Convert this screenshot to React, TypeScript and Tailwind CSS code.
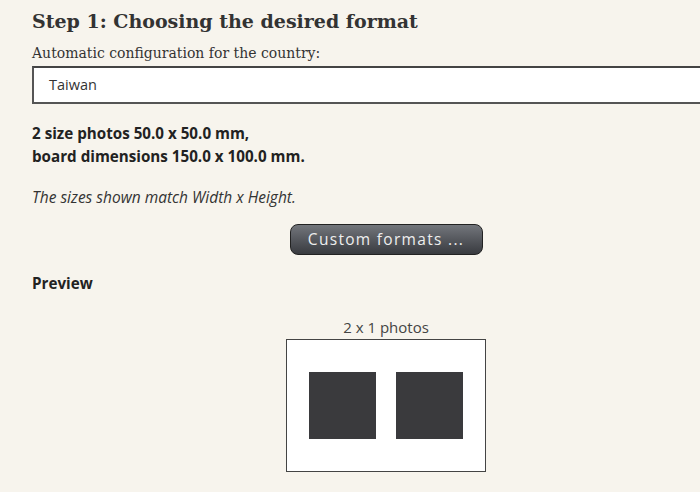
export default function App() {
  return (
    <div className="h-[492px] w-[700px] overflow-hidden bg-[#f7f4ed] text-[#333333]">
      <div className="ml-8 w-[708px]" style={{ fontFamily: '"Open Sans", sans-serif' }}>
        <h1
          className="pt-[7px] text-[19px] font-bold leading-[28px] text-[#333]"
          style={{ fontFamily: '"DejaVu Serif", Georgia, serif' }}
        >
          Step 1: Choosing the desired format
        </h1>
        <label
          className="mt-[8px] block text-[14px] leading-[20px]"
          style={{ fontFamily: '"DejaVu Serif", Georgia, serif' }}
        >
          Automatic configuration for the country:
        </label>
        <div className="mt-[3px] flex h-[38px] items-center border-y-2 border-l-2 border-[#555] border-t-[#444] bg-white pl-[15px] text-[14.5px] text-[#333]">
          Taiwan
        </div>
        <p className="mt-[18px] text-[15.2px] font-bold leading-[23px] text-[#222]">
          2 size photos 50.0 x 50.0 mm,
          <br />
          board dimensions 150.0 x 100.0 mm.
        </p>
        <p className="mt-[19px] text-[15.5px] italic leading-[20px] text-[#333]">
          The sizes shown match Width x Height.
        </p>
        <div className="mt-[17px] flex justify-center">
          <button className="h-[31px] w-[193px] rounded-[8px] border border-[#222] bg-gradient-to-b from-[#73767c] to-[#393b40] text-[15.5px] tracking-[1.3px] text-[#eeeeee]">
            Custom formats ...
          </button>
        </div>
        <h2 className="mt-[18px] text-[15.2px] font-bold leading-[20px] text-[#222]">
          Preview
        </h2>
        <div className="mt-[24px] flex flex-col items-center">
          <div className="text-[15px] leading-[20px] text-[#444]">2 x 1 photos</div>
          <div className="mt-[2px] flex h-[133px] w-[200px] items-center justify-center gap-[20px] border border-[#444] bg-white">
            <div className="h-[67px] w-[67px] bg-[#3a3a3d]" />
            <div className="h-[67px] w-[67px] bg-[#3a3a3d]" />
          </div>
        </div>
      </div>
    </div>
  );
}
